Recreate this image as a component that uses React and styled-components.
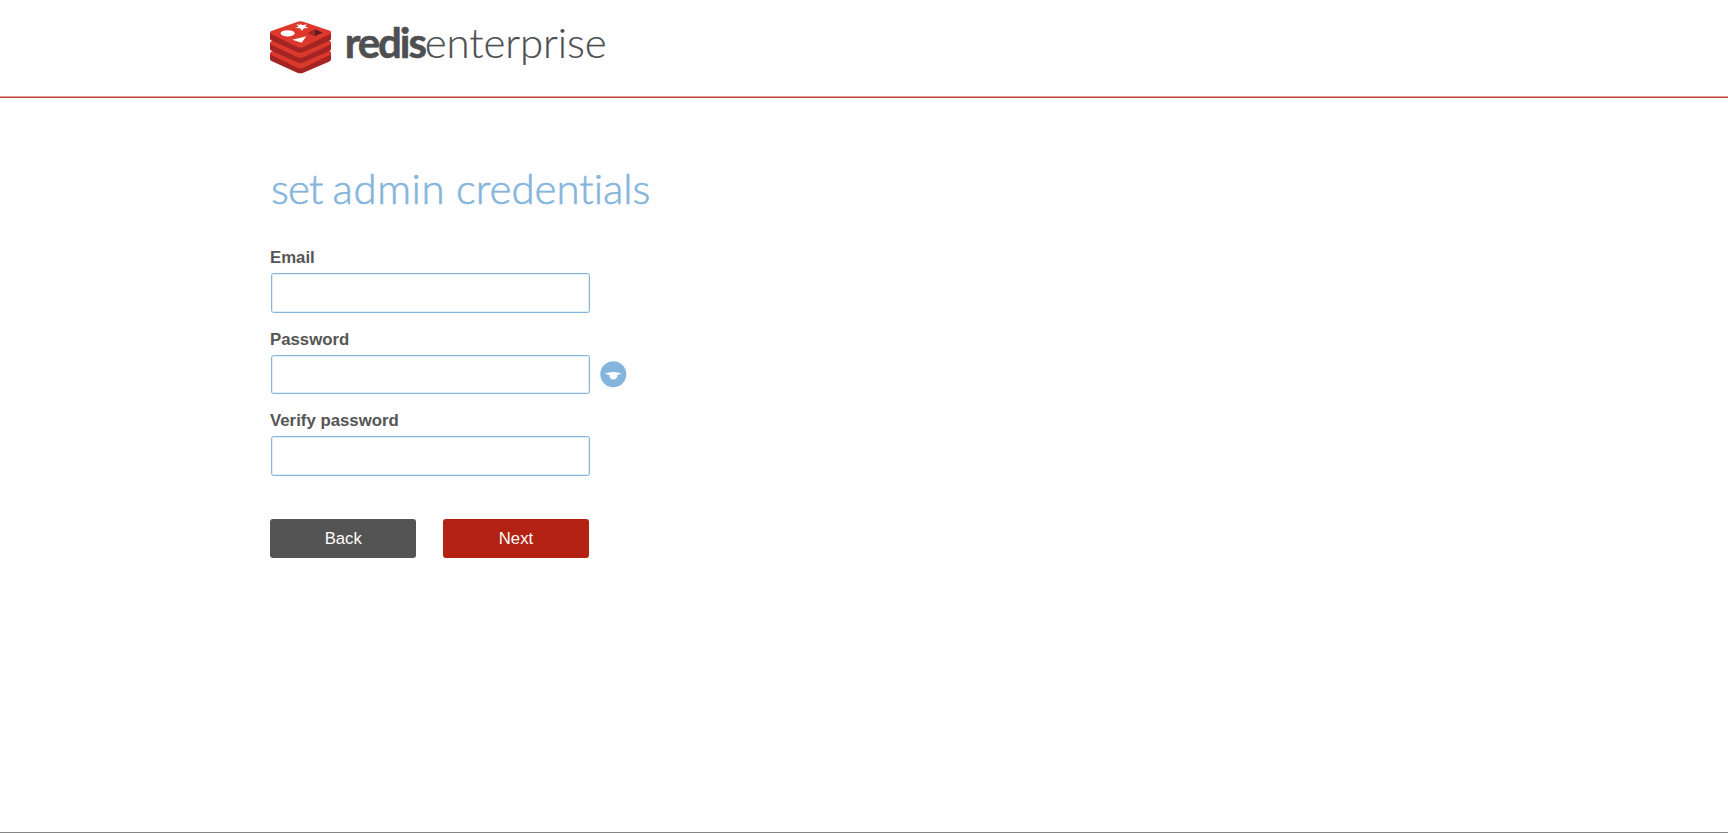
import React from 'react';
import styled, { createGlobalStyle } from 'styled-components';

const GlobalStyle = createGlobalStyle`
  * { box-sizing: border-box; }
  body {
    margin: 0;
    background: #fefefe;
    color: #555;
    font-family: "Liberation Sans", Arial, sans-serif;
  }
`;

const Page = styled.div`
  display: flex;
  flex-direction: column;
  height: 833px;
  overflow: hidden;
  border-bottom: 1px solid #858585;
`;

const Header = styled.header`
  display: flex;
  align-items: flex-start;
  flex: none;
  height: 98px;
  padding: 21px 0 0 270px;
  border-bottom: 1px solid #bd4a3a;
  box-shadow: inset 0 -1px 0 #dd9a90;
`;

const BrandName = styled.div`
  display: flex;
  margin: -5px 0 0 13.5px;
  color: #4d4f51;
  font: 300 42px/52px Lato, sans-serif;
  white-space: nowrap;
`;

const Strong = styled.span`
  font-weight: 700;
  letter-spacing: -2.1px;
  -webkit-text-stroke: 0.6px currentColor;
`;

const Light = styled.span`
  letter-spacing: -0.1px;
  -webkit-text-stroke: 0.2px currentColor;
`;

const Main = styled.main`
  display: flex;
  flex-direction: column;
  padding: 64px 0 0 270px;
`;

const Title = styled.h1`
  display: flex;
  margin: 0;
  padding-left: 1px;
  height: 86px;
  color: #85b5dc;
  font: 300 42px/52px Lato, sans-serif;
  font-variant-ligatures: none;
  -webkit-text-stroke: 0.6px currentColor;
  white-space: nowrap;
`;

const Word = styled.span`
  width: ${(p) => p.$width}px;
  letter-spacing: ${(p) => p.$spacing}px;
`;

const Field = styled.div`
  display: flex;
  flex-direction: column;
  height: 81.7px;
`;

const Label = styled.label`
  height: 25px;
  font-size: 16.8px;
  line-height: 20px;
  font-weight: 700;
`;

const InputRow = styled.div`
  display: flex;
  align-items: flex-start;
  gap: 9.6px;
  padding-left: 1px;

  svg {
    margin-top: 6px;
  }
`;

const Input = styled.input`
  width: 319.4px;
  height: 39.6px;
  padding: 0 10px;
  border: 1.3px solid #85b5dc;
  border-radius: 2.5px;
  background: #fefefe;
  box-shadow: inset 0 0 0 0.5px #c5def1;
  outline: none;
`;

const Actions = styled.div`
  display: flex;
  gap: 26.4px;
  padding-top: 26px;
`;

const Button = styled.button`
  width: 146.4px;
  height: 38.6px;
  padding: 1px 0 0;
  border: 0;
  border-radius: 3px;
  background: ${(p) => (p.$primary ? '#b32212' : '#545454')};
  color: #fefefe;
  font: 16.7px/37px "Liberation Sans", Arial, sans-serif;
`;

const LogoMark = () => (
  <svg width="61.3" height="53" viewBox="30 33 184 159" aria-hidden="true">
    {[62, 31, 0].map((dy) => (
      <g key={dy} transform={`translate(0 ${dy})`}>
        <path d="M30 68V86Q31 90 36 92L112 126Q121 130 130 126L207 93Q213 90 214 86V68Z" fill="#a32422" />
        <path d="M34 73Q26 68 34 63L113 35Q121 32 130 35L210 62Q218 67 210 73L130 111Q121 115 112 111Z" fill="#dc382c" />
      </g>
    ))}
    <ellipse cx="83" cy="70" rx="21" ry="9.5" fill="#fff" />
    <path d="M97 89L139 79L125 98Z" fill="#fff" />
    <path d="M119 40L127 46L140 43L136 50L146 54L132 55L126 62L120 55L105 54L116 50L109 43L121 45Z" fill="#fff" />
    <path d="M164 58L188 68L164 79Z" fill="#621b1c" />
    <path d="M164 58V79L143 70Z" fill="#9a2928" />
  </svg>
);

const EyeIcon = () => (
  <svg width="27" height="27" viewBox="0 0 27 27" aria-hidden="true">
    <circle cx="13.3" cy="13.3" r="13" fill="#85b5dc" />
    <path d="M4.6 12.8Q9 11.1 13.2 11Q17.5 11.1 21.8 12.8L17.3 14Q17.3 18.4 13.3 18.5Q9.4 18.4 9.4 14Z" fill="#fff" />
  </svg>
);

const titleWords = [
  { text: 'set', width: 61.5, spacing: -0.9 },
  { text: 'admin', width: 123.5, spacing: 0.6 },
  { text: 'credentials', width: 196, spacing: 0 },
];

const fields = [
  { id: 'email', label: 'Email', type: 'email' },
  { id: 'password', label: 'Password', type: 'password', reveal: true },
  { id: 'verify', label: 'Verify password', type: 'password' },
];

export default function App() {
  return (
    <>
      <GlobalStyle />
      <Page>
        <Header>
          <LogoMark />
          <BrandName>
            <Strong>redis</Strong>
            <Light>enterprise</Light>
          </BrandName>
        </Header>
        <Main>
          <Title>
            {titleWords.map((w) => (
              <Word key={w.text} $width={w.width} $spacing={w.spacing}>{w.text} </Word>
            ))}
          </Title>
          {fields.map((f) => (
            <Field key={f.id}>
              <Label htmlFor={f.id}>{f.label}</Label>
              <InputRow>
                <Input id={f.id} type={f.type} />
                {f.reveal && <EyeIcon />}
              </InputRow>
            </Field>
          ))}
          <Actions>
            <Button type="button">Back</Button>
            <Button type="button" $primary>Next</Button>
          </Actions>
        </Main>
      </Page>
    </>
  );
}
